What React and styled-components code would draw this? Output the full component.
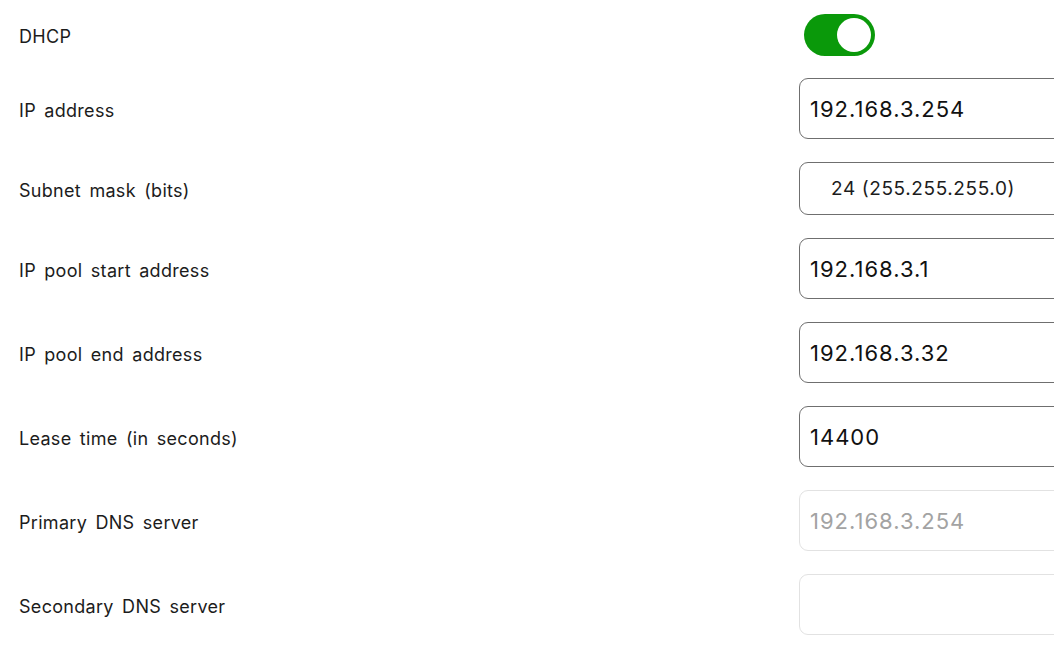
import React, { useState } from 'react'
import styled, { createGlobalStyle } from 'styled-components'

const GlobalStyle = createGlobalStyle`
body {
  margin: 0;
  background: #fff;
  overflow: hidden;
  font-family: "Inter", "Liberation Sans", sans-serif;
}`;

const Form = styled.div`
display: flex;
flex-direction: column;
gap: 23px;
padding: 14px 0 0 19px;
width: 1100px;`;

const Row = styled.div`
display: grid;
grid-template-columns: 780px 320px;
align-items: center;
margin-bottom: ${p => p.$tight ? '-1px' : '0'};`;

const Label = styled.div`
font-size: 18px;
color: #1c1c1c;
letter-spacing: 0.3px;
word-spacing: 3px;
padding-top: 3px;`;

const Switch = styled.button`
width: 71px;
height: 42px;
margin-left: 5px;
border: none;
border-radius: 21px;
padding: 4px;
display: flex;
justify-content: ${p => p.$on ? 'flex-end' : 'flex-start'};
background: ${p => p.$on ? '#0a990a' : '#d0d0d0'};
cursor: pointer;`;

const Knob = styled.span`
width: 34px;
height: 34px;
border-radius: 50%;
background: #fff;`;

const Input = styled.input`
box-sizing: border-box;
height: 61px;
width: 100%;
padding: 0 10px;
border: 1px solid ${p => p.disabled ? '#e2e2e2' : '#6f6f6f'};
border-radius: 9px;
background: #fff;
font-family: "Inter", "Liberation Sans", sans-serif;
font-size: 22px;
letter-spacing: 1px;
color: #111;
outline: none;
&::placeholder { color: #a3a3a3; }
&:disabled { background: #fff; }`;

const Select = styled.div`
box-sizing: border-box;
height: 53px;
display: flex;
align-items: center;
padding-left: 31px;
border: 1px solid #6f6f6f;
border-radius: 9px;
font-size: 19px;
letter-spacing: 0.6px;
color: #1c1c1c;`;

const fields = [
  { label: 'IP address', value: '192.168.3.254' },
  { label: 'Subnet mask (bits)', select: '24 (255.255.255.0)' },
  { label: 'IP pool start address', value: '192.168.3.1' },
  { label: 'IP pool end address', value: '192.168.3.32' },
  { label: 'Lease time (in seconds)', value: '14400' },
  { label: 'Primary DNS server', placeholder: '192.168.3.254', disabled: true },
  { label: 'Secondary DNS server', placeholder: '', disabled: true },
];

export default function App() {
  const [dhcp, setDhcp] = useState(true)
  return (
    <>
      <GlobalStyle />
      <Form>
        <Row $tight>
          <Label>DHCP</Label>
          <Switch $on={dhcp} onClick={() => setDhcp(!dhcp)}><Knob /></Switch>
        </Row>
        {fields.map(f => (
          <Row key={f.label}>
            <Label>{f.label}</Label>
            {f.select
              ? <Select>{f.select}</Select>
              : <Input defaultValue={f.value} placeholder={f.placeholder} disabled={f.disabled} />}
          </Row>
        ))}
      </Form>
    </>
  )
}
